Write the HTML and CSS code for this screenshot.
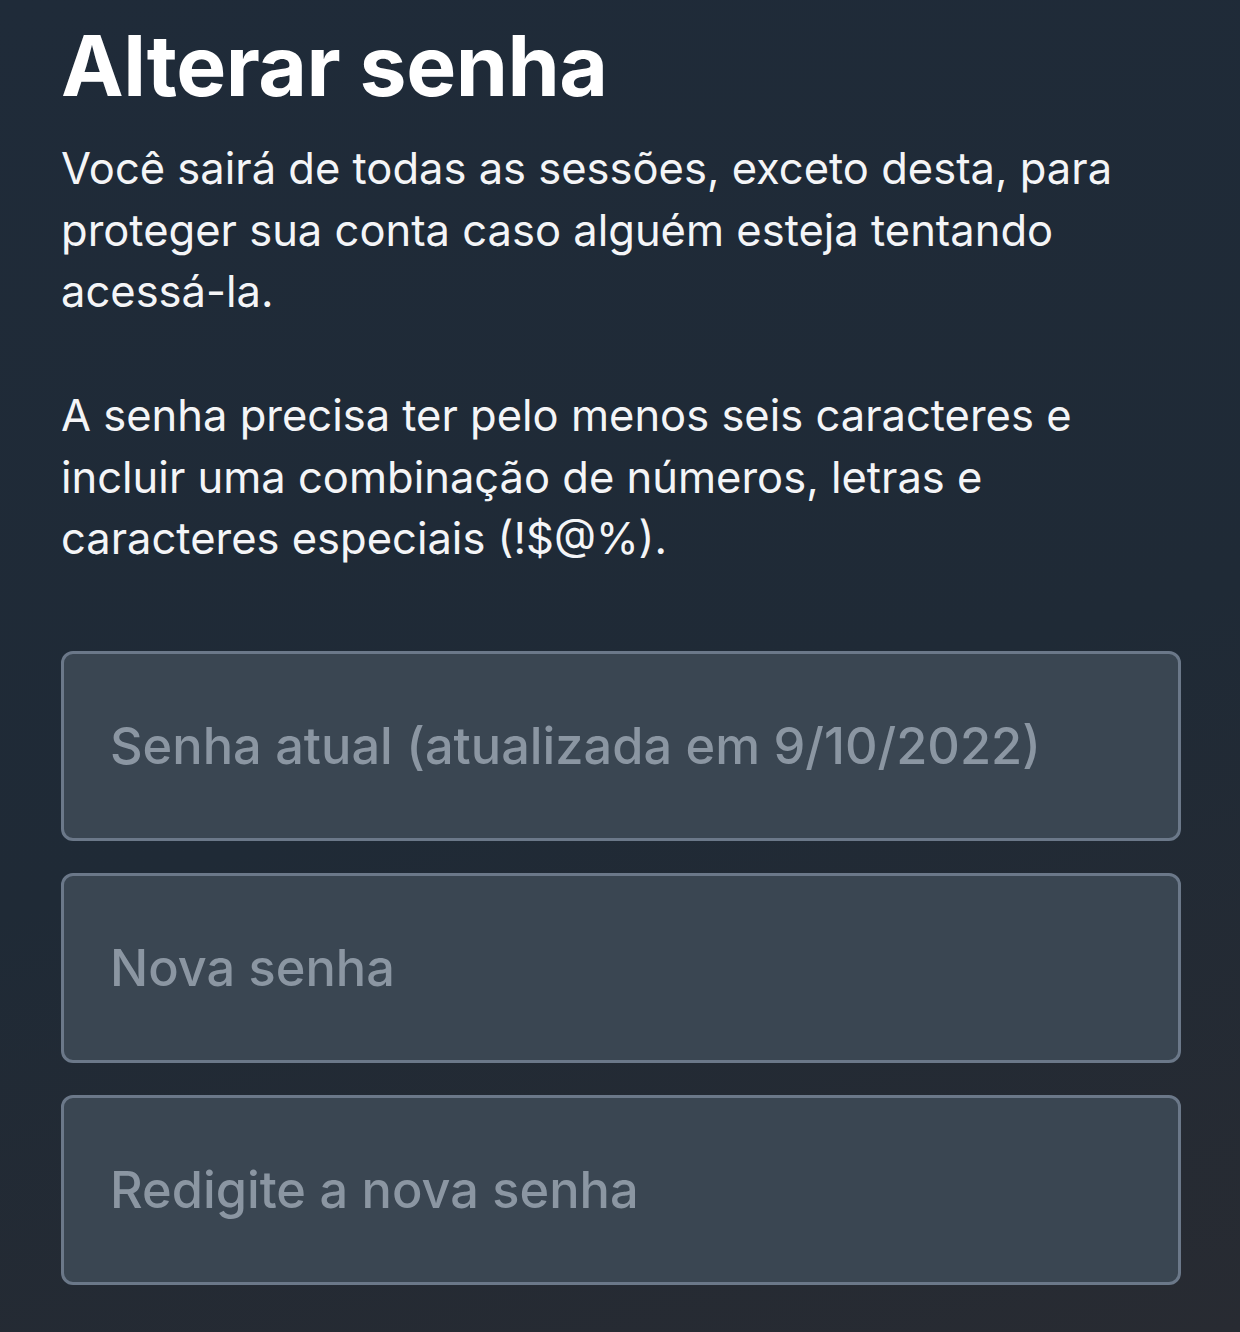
FILE: index.html
```html
<!DOCTYPE html>
<html lang="pt-BR">
<head>
<meta charset="utf-8">
<title>Alterar senha</title>
<link rel="stylesheet" href="styles.css">
</head>
<body>
<main class="page">
  <h1 class="title">Alterar senha</h1>
  <p class="desc">Você sairá de todas as sessões, exceto desta, para<br>proteger sua conta caso alguém esteja tentando<br>acessá-la.</p>
  <p class="desc">A senha precisa ter pelo menos seis caracteres e<br>incluir uma combinação de números, letras e<br>caracteres especiais (!$@%).</p>
  <form class="fields">
    <div class="field"><span class="placeholder">Senha atual (atualizada em 9/10/2022)</span></div>
    <div class="field"><span class="placeholder">Nova senha</span></div>
    <div class="field"><span class="placeholder">Redigite a nova senha</span></div>
  </form>
</main>
</body>
</html>
```
FILE: styles.css
```css
html, body {
  margin: 0;
  padding: 0;
}
body {
  width: 1240px;
  height: 1332px;
  overflow: hidden;
  background: linear-gradient(165deg, #1f2b39 0%, #1f2a36 55%, #282b32 100%);
  font-family: Inter, "Noto Sans", sans-serif;
  color: #f4f5f7;
}
.page {
  padding: 18px 59px 0 61px;
  display: flex;
  flex-direction: column;
}
.title {
  margin: 0;
  font-size: 84px;
  font-weight: 700;
  line-height: 96px;
  color: #ffffff;
  letter-spacing: -0.5px;
}
.desc {
  margin: 24px 0 0;
  font-size: 43.5px;
  line-height: 61.5px;
  font-weight: 400;
}
.desc + .desc {
  margin-top: 62.5px;
}
.fields {
  margin-top: 81px;
  display: flex;
  flex-direction: column;
  gap: 32px;
}
.field {
  box-sizing: border-box;
  height: 190px;
  border: 3px solid #6b7889;
  border-radius: 12px;
  background: #3a4652;
  display: flex;
  align-items: center;
  padding-left: 46px;
}
.placeholder {
  font-size: 50.5px;
  font-weight: 500;
  color: #8b96a2;
}
```
